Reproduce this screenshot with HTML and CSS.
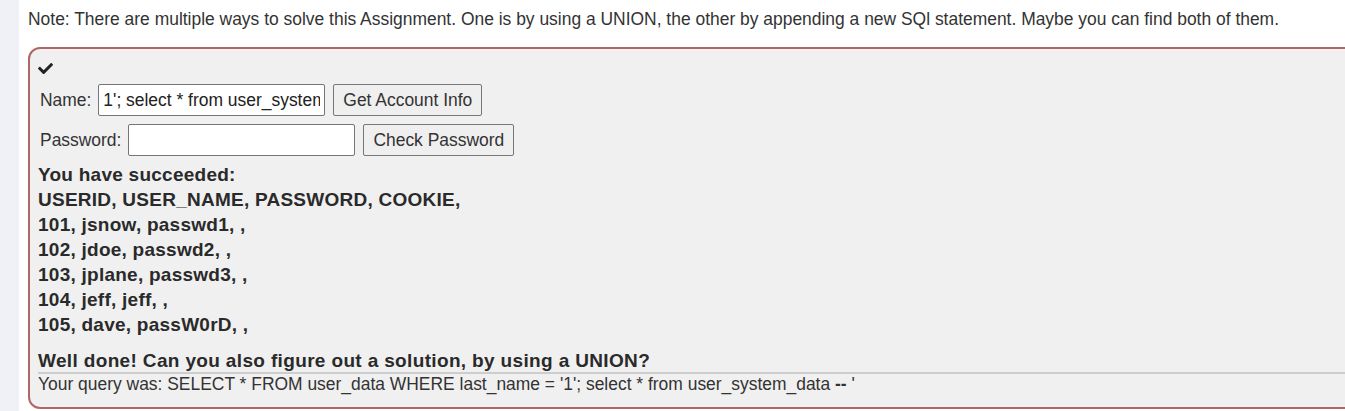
FILE: index.html
```html
<!DOCTYPE html>
<html>
<head>
<meta charset="utf-8">
<link rel="stylesheet" href="styles.css">
</head>
<body>
<div class="page">
  <aside class="rail"></aside>
  <main class="main">
    <p class="note">Note: There are multiple ways to solve this Assignment. One is by using a UNION, the other by appending a new SQl statement. Maybe you can find both of them.</p>
    <section class="attack">
      <div class="check">
        <svg width="15" height="13" viewBox="0 0 512 440"><path d="M173.9 439.4L7.5 273c-10-10-10-26.2 0-36.2l36.2-36.2c10-10 26.2-10 36.2 0L192 312.7 432.1 72.6c10-10 26.2-10 36.2 0l36.2 36.2c10 10 10 26.2 0 36.2L210.1 439.4c-10 10-26.2 10-36.2 0z" fill="#222"/></svg>
      </div>
      <form class="row">
        <label class="lbl">Name:</label>
        <input class="field" type="text" value="1'; select * from user_system_data --">
        <button class="btn" type="button">Get Account Info</button>
      </form>
      <form class="row">
        <label class="lbl">Password:</label>
        <input class="field" type="text" value="">
        <button class="btn" type="button">Check Password</button>
      </form>
      <div class="output">
        <p>You have succeeded:<br>USERID, USER_NAME, PASSWORD, COOKIE,<br>101, jsnow, passwd1, ,<br>102, jdoe, passwd2, ,<br>103, jplane, passwd3, ,<br>104, jeff, jeff, ,<br>105, dave, passW0rD, ,<br></p>
        <p class="done">Well done! Can you also figure out a solution, by using a UNION?</p>
      </div>
      <div class="query">Your query was: SELECT * FROM user_data WHERE last_name = '1'; select * from user_system_data <b>--</b> '</div>
    </section>
  </main>
</div>
</body>
</html>
```
FILE: styles.css
```css
html, body {
  margin: 0;
  padding: 0;
  background: #fff;
  overflow: hidden;
}
body {
  font-family: "Liberation Sans", Arial, sans-serif;
  color: #333;
  font-size: 17.45px;
}
.page {
  display: flex;
  min-height: 411px;
}
.rail {
  width: 19px;
  flex: none;
  background: #eff1f6;
}
.main {
  flex: 1;
  padding: 9px 0 0 9px;
  min-width: 0;
}
.note {
  margin: 0 0 18px 0;
  line-height: 20px;
  white-space: nowrap;
}
.attack {
  margin-right: -30px;
  border: 2px solid #b06666;
  border-radius: 12px;
  background: #f0f0f0;
  padding: 10px 0 6px 8px;
  height: 362px;
  box-sizing: border-box;
}
.check {
  height: 23px;
}
.check svg { display: block; margin-top: 2px; }
.row {
  display: flex;
  align-items: center;
  gap: 8px;
  margin: 0 0 8px 2px;
  height: 32px;
}
.lbl {
  margin-right: -1px;
}
.field {
  width: 227px;
  height: 32px;
  box-sizing: border-box;
  border: 1px solid #767676;
  border-radius: 2px;
  background: #fff;
  font: 17.45px "Liberation Sans", Arial, sans-serif;
  color: #222;
  padding: 0 4px;
}
.btn {
  height: 32px;
  box-sizing: border-box;
  border: 1px solid #767676;
  border-radius: 2px;
  background: #efefef;
  font: 17.45px "Liberation Sans", Arial, sans-serif;
  color: #333;
  padding: 0 9px;
}
.output {
  margin-top: -2px;
  font-weight: bold;
  font-size: 19px;
  letter-spacing: 0.25px;
  line-height: 25px;
  color: #2a2a2a;
}
.output p { margin: 0; }
.output .done { margin-top: 12px; line-height: 23px; letter-spacing: 0.35px; }
.query {
  border-top: 2px solid #cdcdcd;
  line-height: 20px;
  white-space: nowrap;
}
.query b { font-weight: bold; }
```
